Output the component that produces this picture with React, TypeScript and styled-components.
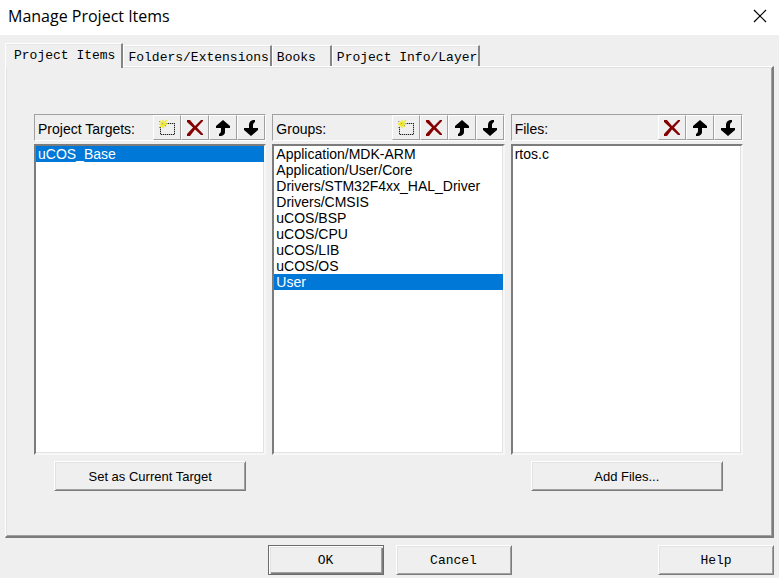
import React, { useId, useState } from "react";
import styled, { createGlobalStyle, css } from "styled-components";

const GlobalStyle = createGlobalStyle`
  * {
    box-sizing: border-box;
  }
  body {
    margin: 0;
    background: #efefef;
    color: #000;
    font-family: "Liberation Sans", Arial, sans-serif;
    font-size: 14px;
  }
  button {
    font: inherit;
    color: inherit;
    background: #efefef;
    padding: 0;
  }
`;

const mono = css`
  font-family: "Liberation Mono", "Courier New", monospace;
  font-size: 13px;
`;

const raised = css`
  border: 1px solid;
  border-color: #fff #7c7c7c #7c7c7c #fff;
  box-shadow: inset 1px 1px #e2e2e2, inset -1px -1px #a0a0a0;
`;

const Dialog = styled.main`
  display: flex;
  flex-direction: column;
  min-height: 100vh;
`;

const TitleBar = styled.header`
  display: flex;
  align-items: center;
  justify-content: space-between;
  height: 35px;
  padding: 0 12px 4px 8px;
  background: #fff;
`;

const Title = styled.h1`
  margin: 0;
  font-family: "Open Sans", "Noto Sans", sans-serif;
  font-size: 16px;
  font-weight: 400;
  line-height: 24px;
`;

const CloseButton = styled.button`
  display: flex;
  border: 0;
  background: none;
`;

const TabStrip = styled.div`
  display: flex;
  align-items: flex-end;
  padding: 8px 5px 0;
`;

const Tab = styled.button<{ $active: boolean }>`
  ${mono}
  min-width: 60px;
  height: 21px;
  padding: 2px 1px 0 4px;
  border: solid;
  border-width: 1px 2px 0 1px;
  border-color: #fff #858585 #fff #fff;
  border-radius: 2px 1px 0 0;
  box-shadow: inset 0 1px #e6e6e6;
  text-align: left;
  white-space: nowrap;

  ${({ $active }) =>
    $active &&
    css`
      z-index: 1;
      height: 25px;
      margin-bottom: -2px;
      padding: 0 6px 2px 8px;
    `}
`;

const Panel = styled.section`
  display: flex;
  flex: 1;
  flex-direction: column;
  margin: 0 5px 7px;
  padding: 47px 29px 45px 28px;
  border: solid;
  border-width: 1px 2px 2px 1px;
  border-color: #fff #7c7c7c #7c7c7c #fff;
  box-shadow: inset 1px 1px #e2e2e2, inset -1px -1px #a0a0a0;
`;

const Columns = styled.div`
  display: grid;
  flex: 1;
  grid-template-columns: repeat(3, minmax(0, 1fr));
  gap: 6px;
`;

const Column = styled.div`
  display: flex;
  flex-direction: column;
`;

const ColumnHeader = styled.div`
  display: flex;
  align-items: center;
  height: 27px;
  margin-bottom: 3px;
  padding-left: 3px;
  border: 1px solid;
  border-color: #a0a0a0 #fff #fff #a0a0a0;
`;

const ColumnLabel = styled.label`
  flex: 1;
  padding-top: 2px;
`;

const ToolButton = styled.button`
  display: flex;
  align-items: center;
  justify-content: center;
  width: 28px;
  height: 25px;
  border: 1px solid;
  border-color: #fff #a0a0a0 #a0a0a0 #fff;
`;

const ListBox = styled.select`
  flex: 1;
  padding: 0;
  overflow: hidden;
  border: 2px solid;
  border-color: #7c7c7c #f7f7f7 #f7f7f7 #7c7c7c;
  border-radius: 0;
  outline: 0;
  background: #fff;
  box-shadow: inset -1px -1px #e2e2e2;
  color: #000;
  font: 14px "Liberation Sans", Arial, sans-serif;

  option {
    min-height: 16px;
    height: 16px;
    padding: 0 2px;
    line-height: 17px;
  }
  option:checked {
    background: #0078d7 linear-gradient(#0078d7, #0078d7);
    color: #fff;
  }
`;

const ActionSlot = styled.div`
  display: flex;
  justify-content: center;
  height: 30px;
  margin-top: 6px;
`;

const PushButton = styled.button<{ $isDefault?: boolean }>`
  ${raised}
  height: 30px;
  ${({ $isDefault }) =>
    $isDefault &&
    css`
      border-color: #6c6c6c;
      box-shadow: inset 1px 1px #fff, inset 2px 2px #e2e2e2, inset -1px -1px #7c7c7c, inset -2px -2px #a0a0a0;
    `}
`;

const ActionButton = styled(PushButton)`
  width: 192px;
  font-size: 13px;
`;

const Footer = styled.footer`
  display: grid;
  grid-template-columns: 1fr auto auto 1fr;
  gap: 12px;
  padding: 0 5px 3px;
`;

const DialogButton = styled(PushButton)`
  ${mono}
  width: 116px;

  &:first-child {
    grid-column: 2;
  }
  &:last-child {
    justify-self: end;
  }
`;

const CloseIcon = () => (
  <svg width="14" height="14" viewBox="0 0 14 14" stroke="#000" strokeWidth="1.2">
    <path d="M1 1 13 13M13 1 1 13" />
  </svg>
);

const NewIcon = () => (
  <svg width="18" height="18" viewBox="0 0 18 18" fill="none" shapeRendering="crispEdges">
    <path d="M8 4.5H17M2.500 8V16M3 15.500H17M16.500 4V16" stroke="#222" strokeDasharray="1 1" />
    <path d="M8 4.5H17M2.500 8V16M3 15.500H17M16.500 4V16" stroke="#222" strokeOpacity=".3" />
    <path d="M5 1V9M1 5H9M2 2 8 8M9 1 2 8" stroke="#eee72b" strokeWidth="1.3" shapeRendering="auto" />
    <path d="M1 2h1v1H1zM1 8h1v1H1zM4 4h1v1H4zM7 6h1v1H7z" fill="#999" />
  </svg>
);

const DeleteIcon = () => (
  <svg width="18" height="18" viewBox="0 0 18 18" fill="#850000">
    <path d="M1 1H4L9 7 15 1H17V2L11 8.500 17 15V16H15L9 10.500 4 17H1V15L7 8.500 1 3Z" />
  </svg>
);

const UpIcon = () => (
  <svg width="16" height="18" viewBox="0 0 16 18">
    <path d="M8 1 15 7V9H10V13Q10 16 6 17H4V15Q6 14 6 12V9H1V7Z" />
  </svg>
);

const DownIcon = () => (
  <svg width="16" height="18" viewBox="0 0 16 18">
    <path d="M8 17 15 11V9H10V6Q10 4 12 3V1H10Q6 2 6 6V9H1V11Z" />
  </svg>
);

const tools = {
  new: { label: "New", Icon: NewIcon },
  delete: { label: "Delete", Icon: DeleteIcon },
  up: { label: "Move Up", Icon: UpIcon },
  down: { label: "Move Down", Icon: DownIcon },
};

type Tool = keyof typeof tools;

interface ItemColumnProps {
  label: string;
  items: string[];
  selected?: string[];
  actions: Tool[];
  button?: string;
}

function ItemColumn({ label, items, selected = [], actions, button }: ItemColumnProps) {
  const id = useId();
  const [value, setValue] = useState(selected);
  return (
    <Column>
      <ColumnHeader>
        <ColumnLabel htmlFor={id}>{label}</ColumnLabel>
        {actions.map((action) => {
          const { label: name, Icon } = tools[action];
          return (
            <ToolButton key={action} type="button" aria-label={name}>
              <Icon />
            </ToolButton>
          );
        })}
      </ColumnHeader>
      <ListBox
        id={id}
        multiple
        size={10}
        value={value}
        onChange={(e) => setValue(Array.from(e.target.selectedOptions, (option) => option.value))}
      >
        {items.map((item) => (
          <option key={item}>{item}</option>
        ))}
      </ListBox>
      <ActionSlot>{button && <ActionButton type="button">{button}</ActionButton>}</ActionSlot>
    </Column>
  );
}

const tabs = ["Project Items", "Folders/Extensions", "Books", "Project Info/Layer"];

const groups = [
  "Application/MDK-ARM",
  "Application/User/Core",
  "Drivers/STM32F4xx_HAL_Driver",
  "Drivers/CMSIS",
  "uCOS/BSP",
  "uCOS/CPU",
  "uCOS/LIB",
  "uCOS/OS",
  "User",
];

export default function App() {
  return (
    <>
      <GlobalStyle />
      <Dialog>
        <TitleBar>
          <Title>Manage Project Items</Title>
          <CloseButton type="button" aria-label="Close">
            <CloseIcon />
          </CloseButton>
        </TitleBar>
        <TabStrip role="tablist">
          {tabs.map((tab, i) => (
            <Tab key={tab} type="button" role="tab" aria-selected={i === 0} $active={i === 0}>
              {tab}
            </Tab>
          ))}
        </TabStrip>
        <Panel role="tabpanel" aria-label="Project Items">
          <Columns>
            <ItemColumn
              label="Project Targets:"
              items={["uCOS_Base"]}
              selected={["uCOS_Base"]}
              actions={["new", "delete", "up", "down"]}
              button="Set as Current Target"
            />
            <ItemColumn
              label="Groups:"
              items={groups}
              selected={["User"]}
              actions={["new", "delete", "up", "down"]}
            />
            <ItemColumn
              label="Files:"
              items={["rtos.c"]}
              actions={["delete", "up", "down"]}
              button="Add Files..."
            />
          </Columns>
        </Panel>
        <Footer>
          <DialogButton type="button" $isDefault>OK</DialogButton>
          <DialogButton type="button">Cancel</DialogButton>
          <DialogButton type="button">Help</DialogButton>
        </Footer>
      </Dialog>
    </>
  );
}
